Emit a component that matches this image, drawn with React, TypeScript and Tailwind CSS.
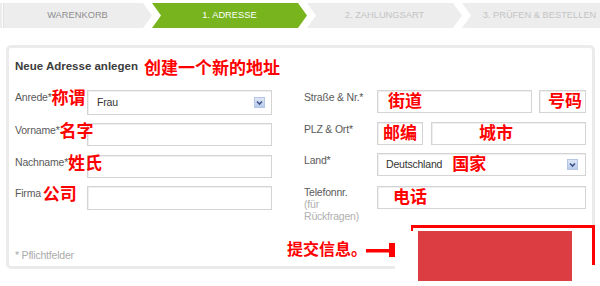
import React from "react";

function SelArrow() {
  return (
    <svg width="11" height="11" viewBox="0 0 11 11" className="shrink-0">
      <defs>
        <linearGradient id="sg" x1="0" y1="0" x2="0" y2="1">
          <stop offset="0" stopColor="#dfe8f7" />
          <stop offset="1" stopColor="#b8c9ea" />
        </linearGradient>
      </defs>
      <rect x="0.5" y="0.5" width="10" height="10" fill="url(#sg)" stroke="#b4c5e6" />
      <polyline points="3,4.5 5.5,7 8,4.5" fill="none" stroke="#3d5488" strokeWidth="1.6" />
    </svg>
  );
}

const labelCls =
  "w-[72px] shrink-0 whitespace-nowrap pt-[1px] text-[10.5px] leading-[13px] tracking-[-0.2px] text-[#5a5a5a]";
const redInline =
  "relative z-10 font-bold text-[17px] leading-[6px] align-[-3px] tracking-normal text-[#ff0000]";
const boxCls =
  "border border-[#d4d4d4] bg-white shadow-[inset_1px_1px_0_#efefef] flex items-center";
const redBox = "font-bold text-[17px] leading-none text-[#ff0000]";

export default function App() {
  return (
    <div className="relative w-[600px] h-[286px] overflow-hidden bg-white font-['Liberation_Sans','Noto_Sans_CJK_SC',sans-serif]">
      {/* Breadcrumb */}
      <div className="flex h-[25px] mt-[3px] overflow-hidden text-[9.3px] leading-none">
        <div className="w-[152px] shrink-0 bg-[#ededed] flex items-center justify-center pl-[3px] text-[#8e8e8e] shadow-[inset_2px_0_0_#ececec,inset_3px_0_0_#fbfbfb,inset_4px_0_0_#e2e2e2] [clip-path:polygon(0_0,calc(100%_-_9px)_0,100%_50%,calc(100%_-_9px)_100%,0_100%)]">
          WARENKORB
        </div>
        <div className="w-[155px] shrink-0 bg-[#77b41d] flex items-center justify-center text-white [clip-path:polygon(0_0,calc(100%_-_9px)_0,100%_50%,calc(100%_-_9px)_100%,0_100%,9px_50%)]">
          1. ADRESSE
        </div>
        <div className="w-[155px] shrink-0 bg-[#ededed] flex items-center justify-center text-[#c4c4c4] [clip-path:polygon(0_0,calc(100%_-_9px)_0,100%_50%,calc(100%_-_9px)_100%,0_100%,9px_50%)]">
          2. ZAHLUNGSART
        </div>
        <div className="w-[155px] shrink-0 bg-[#ededed] flex items-center justify-center text-[#c4c4c4] [clip-path:polygon(0_0,calc(100%_-_9px)_0,100%_50%,calc(100%_-_9px)_100%,0_100%,9px_50%)]">
          3. PRÜFEN &amp; BESTELLEN
        </div>
      </div>

      {/* Panel */}
      <div className="mt-[17px] ml-[6px] w-[589px] h-[224px] border-[3px] border-[#ebebeb] rounded-[5px] pl-[6px] pr-[3px]">
        <div className="mt-[9px] h-[16px] leading-[16px] whitespace-nowrap">
          <span className="text-[11.5px] font-bold text-[#3c3c3c]">Neue Adresse anlegen</span>
          <span className="ml-[6px] font-bold text-[17px] leading-[6px] align-[-4px] text-[#ff0000]">
            创建一个新的地址
          </span>
        </div>

        <div className="mt-[17px] flex">
          {/* Left column */}
          <div className="w-[257px] shrink-0 flex flex-col">
            <div className="flex h-[25px]">
              <div className={labelCls}>
                Anrede*<span className={redInline}>称谓</span>
              </div>
              <div className={"w-[185px] h-[25px] justify-between pl-[9px] pr-[6px] " + boxCls}>
                <span className="text-[10.5px] tracking-[-0.2px] text-[#333]">Frau</span>
                <SelArrow />
              </div>
            </div>
            <div className="flex h-[23px] mt-[8px]">
              <div className={labelCls}>
                Vorname*<span className={redInline}>名字</span>
              </div>
              <div className={"w-[185px] h-[23px] " + boxCls} />
            </div>
            <div className="flex h-[23px] mt-[9px]">
              <div className={labelCls}>
                Nachname*<span className={redInline}>姓氏</span>
              </div>
              <div className={"w-[185px] h-[23px] " + boxCls} />
            </div>
            <div className="flex h-[24px] mt-[8px]">
              <div className={labelCls}>
                Firma<span className={"ml-[2px] " + redInline}>公司</span>
              </div>
              <div className={"w-[185px] h-[24px] " + boxCls} />
            </div>
          </div>

          {/* Right column */}
          <div className="ml-[32px] w-[282px] shrink-0 flex flex-col">
            <div className="flex h-[23px]">
              <div className={"w-[73px] " + labelCls}>Straße &amp; Nr.*</div>
              <div className={"w-[155px] h-[23px] pl-[10px] " + boxCls}>
                <span className={redBox}>街道</span>
              </div>
              <div className={"ml-[7px] w-[47px] h-[23px] pl-[8px] " + boxCls}>
                <span className={redBox}>号码</span>
              </div>
            </div>
            <div className="flex h-[23px] mt-[9px]">
              <div className={"w-[73px] " + labelCls}>PLZ &amp; Ort*</div>
              <div className={"w-[46px] h-[23px] pl-[5px] " + boxCls}>
                <span className={redBox}>邮编</span>
              </div>
              <div className={"ml-[8px] w-[155px] h-[23px] pl-[47px] " + boxCls}>
                <span className={redBox}>城市</span>
              </div>
            </div>
            <div className="flex h-[23px] mt-[8px]">
              <div className={"w-[73px] " + labelCls}>Land*</div>
              <div className={"w-[209px] h-[23px] pl-[8px] pr-[7px] " + boxCls}>
                <span className="text-[10.5px] tracking-[-0.2px] text-[#333]">Deutschland</span>
                <span className={"ml-[10px] " + redBox}>国家</span>
                <span className="flex-1" />
                <SelArrow />
              </div>
            </div>
            <div className="flex mt-[10px]">
              <div className="w-[73px] shrink-0 text-[10.5px] leading-[12px] tracking-[-0.2px]">
                <div className="text-[#5a5a5a]">Telefonnr.</div>
                <div className="text-[#b0b0b0]">(für</div>
                <div className="text-[#b0b0b0]">Rückfragen)</div>
              </div>
              <div className={"w-[209px] h-[23px] pl-[15px] " + boxCls}>
                <span className={redBox}>电话</span>
              </div>
            </div>
          </div>
        </div>

        <div className="mt-[27px] text-[10.5px] leading-[13px] tracking-[-0.2px] text-[#ababab]">
          * Pflichtfelder
        </div>
      </div>

      {/* Annotation overlay: submit */}
      <div className="absolute left-[287px] top-[242px] font-bold text-[16px] leading-[16px] text-[#ff0000] whitespace-nowrap">
        提交信息。
      </div>
      <svg className="absolute left-[366px] top-[242px]" width="30" height="16" viewBox="0 0 30 16">
        <rect x="0" y="7" width="25" height="3.5" fill="#ff0000" />
        <rect x="23" y="1" width="6" height="14" fill="#ff0000" />
      </svg>
      <div className="absolute left-[395px] top-[231px] w-[200px] h-[55px] bg-white" />
      <div className="absolute left-[418px] top-[231px] w-[154px] h-[50px] bg-[#db3d42]" />
      <div className="absolute left-[411px] top-[225px] w-[184px] h-[3px] bg-[#ff0000]" />
      <div className="absolute left-[592px] top-[225px] w-[3px] h-[40px] bg-[#ff0000]" />
      <div className="absolute left-[411px] top-[225px] w-[2px] h-[6px] bg-[#ff0000]" />
    </div>
  );
}
